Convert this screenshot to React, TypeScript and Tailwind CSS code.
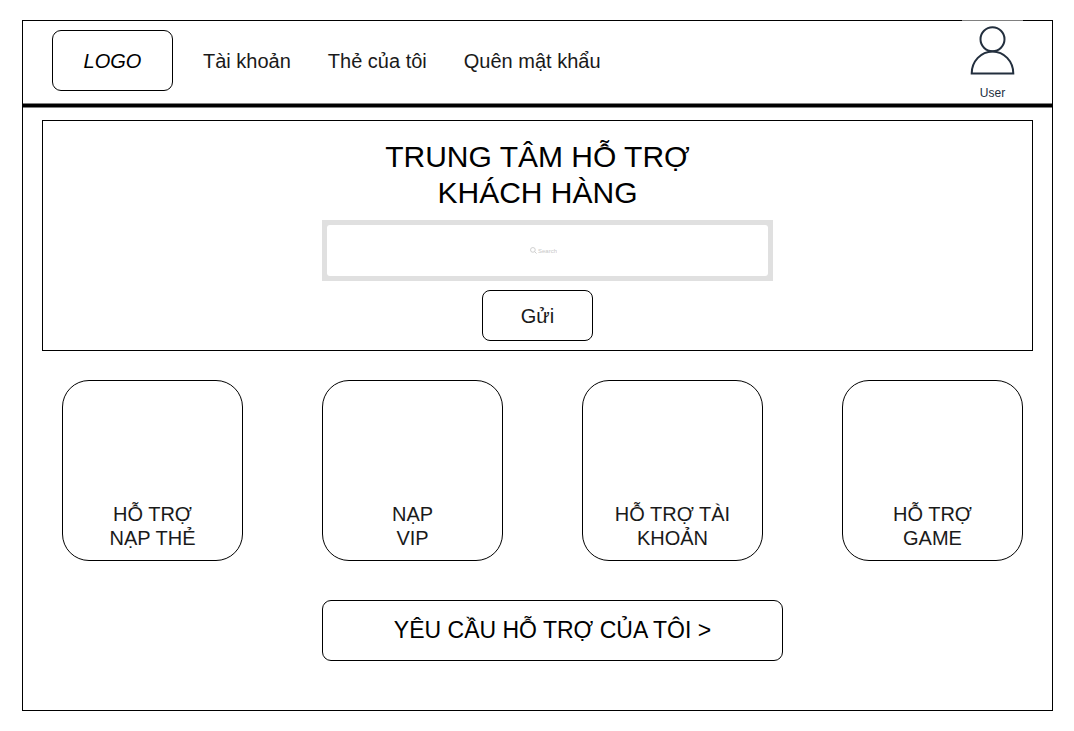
const navLinks = ['Tài khoản', 'Thẻ của tôi', 'Quên mật khẩu'];

const topics = [
  ['HỖ TRỢ', 'NẠP THẺ'],
  ['NẠP', 'VIP'],
  ['HỖ TRỢ TÀI', 'KHOẢN'],
  ['HỖ TRỢ', 'GAME'],
];

function UserIcon() {
  return (
    <svg width="46" height="52" viewBox="0 0 46 52" fill="none" stroke="#232f3e" strokeWidth="2" aria-hidden="true">
      <circle cx="22.5" cy="13.3" r="12" />
      <path d="M1.7 47.4A20.8 22 0 0 1 43.3 47.4Z" />
    </svg>
  );
}

function SearchIcon() {
  return (
    <svg width="7" height="7" viewBox="0 0 8 8" fill="none" stroke="#c8c8c8" strokeWidth="1" aria-hidden="true">
      <circle cx="3.3" cy="3.3" r="2.7" />
      <path d="M5.3 5.3L7.5 7.5" />
    </svg>
  );
}

function Header() {
  return (
    <header>
      <div className="flex items-start justify-between pr-[29px] pl-[29px]">
        <div className="flex items-center py-[9px]">
          <a
            href="#"
            className="flex h-[61px] w-[121px] items-center justify-center rounded-[9px] border border-black text-xl italic"
          >
            LOGO
          </a>
          <nav className="ml-[30px] flex gap-[37px] text-xl text-[#1a1a1a]">
            {navLinks.map((label) => (
              <a key={label} href="#">
                {label}
              </a>
            ))}
          </nav>
        </div>
        <a
          href="#"
          className="-mt-px flex h-[83px] w-[61px] flex-col items-center border-t border-[#808080] pt-[5px] text-xs text-[#232f3e]"
        >
          <UserIcon />
          <span className="mt-[7px]">User</span>
        </a>
      </div>
      <div className="h-[5px] border-y border-[#808080] bg-black" />
    </header>
  );
}

function SupportSearch() {
  return (
    <section className="mx-[19px] mt-3 border border-black pt-[18px] pb-[9px]">
      <form className="flex flex-col items-center gap-[9px]" onSubmit={(event) => event.preventDefault()}>
        <h1 className="text-center text-[30px] leading-9">
          TRUNG TÂM HỖ TRỢ
          <br />
          KHÁCH HÀNG
        </h1>
        <label className="ml-5 w-full max-w-[451px] bg-[#e0e0e0] p-[5px]">
          <span className="flex h-[51px] items-center justify-center gap-px rounded-[3px] bg-white pr-2">
            <SearchIcon />
            <input
              type="search"
              aria-label="Search"
              placeholder="Search"
              className="field-sizing-content text-[6px] leading-none outline-none placeholder:text-[#c8c8c8]"
            />
          </span>
        </label>
        <button type="submit" className="h-[51px] w-[111px] rounded-[8px] border border-black text-xl text-[#1a1a1a]">
          Gửi
        </button>
      </form>
    </section>
  );
}

export default function App() {
  return (
    <div className="bg-white pt-5 pr-[21px] pb-5 pl-[22px] font-['Liberation_Sans',Arial,sans-serif] text-black">
      <div className="border border-black">
        <Header />
        <main>
          <SupportSearch />
          <section className="mt-[29px] grid grid-cols-4 gap-[79px] pr-[29px] pl-[39px]">
            {topics.map(([first, second]) => (
              <a
                key={first + second}
                href="#"
                className="flex aspect-square flex-col items-center justify-end rounded-[27px] border border-black pb-[10px] text-xl leading-6 text-[#1a1a1a]"
              >
                <span>{first}</span>
                <span>{second}</span>
              </a>
            ))}
          </section>
          <div className="mt-[39px] mb-[49px] flex justify-center">
            <button
              type="button"
              className="ml-[30px] h-[61px] w-full max-w-[461px] rounded-[9px] border border-black text-[23px]"
            >
              YÊU CẦU HỖ TRỢ CỦA TÔI &gt;
            </button>
          </div>
        </main>
      </div>
    </div>
  );
}
